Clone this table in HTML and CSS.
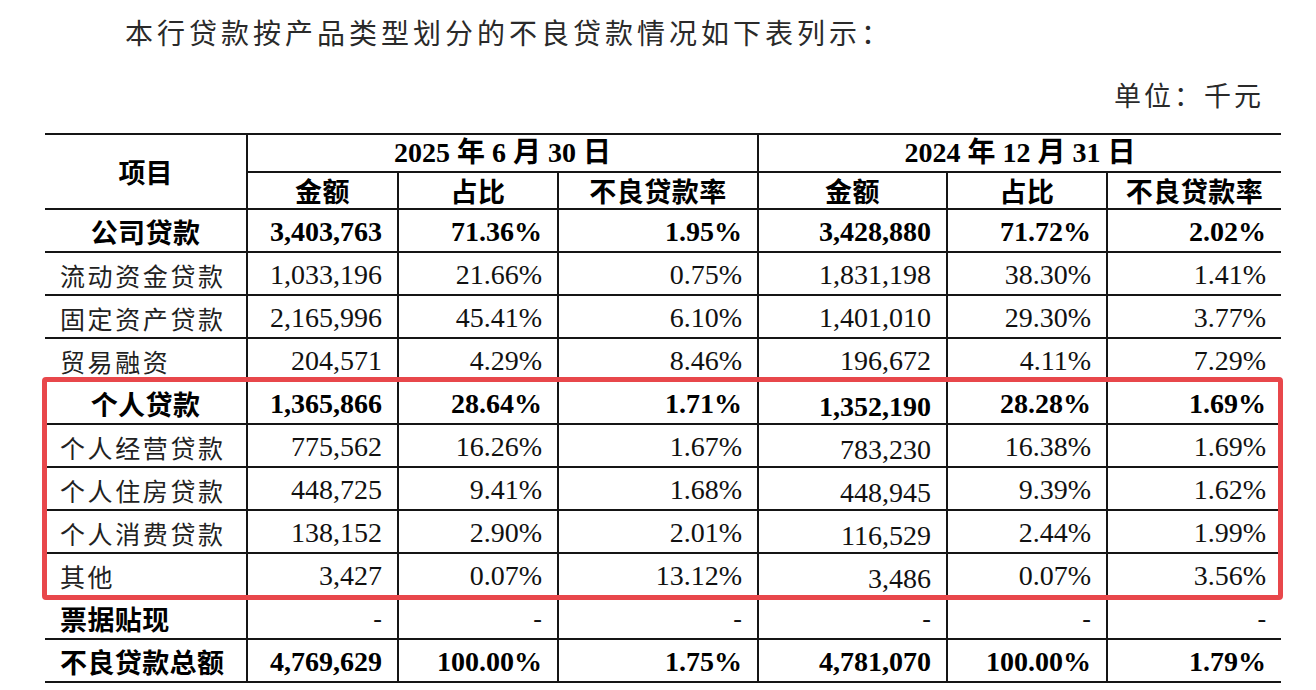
FILE: index.html
```html
<!DOCTYPE html>
<html lang="zh-CN">
<head>
<meta charset="utf-8">
<title>不良贷款情况</title>
<link rel="stylesheet" href="styles.css">
</head>
<body>
<div class="page">
  <p class="intro">本行贷款按产品类型划分的不良贷款情况如下表列示：</p>
  <p class="unit">单位：千元</p>
  <div class="table-wrap">
    <table class="npl">
      <colgroup>
        <col class="c-item"><col class="c-amt1"><col class="c-pct1"><col class="c-rate1">
        <col class="c-amt2"><col class="c-pct2"><col class="c-rate2">
      </colgroup>
      <thead>
        <tr class="hr1">
          <th rowspan="2" class="first">项目</th>
          <th colspan="3" class="date">2025 年 6 月 30 日</th>
          <th colspan="3" class="date last">2024 年 12 月 31 日</th>
        </tr>
        <tr class="hr2">
          <th>金额</th><th>占比</th><th>不良贷款率</th>
          <th>金额</th><th>占比</th><th class="last">不良贷款率</th>
        </tr>
      </thead>
      <tbody>
        <tr class="bold">
          <td class="first center">公司贷款</td>
          <td>3,403,763</td><td>71.36%</td><td>1.95%</td>
          <td>3,428,880</td><td>71.72%</td><td class="last">2.02%</td>
        </tr>
        <tr>
          <td class="first">流动资金贷款</td>
          <td>1,033,196</td><td>21.66%</td><td>0.75%</td>
          <td>1,831,198</td><td>38.30%</td><td class="last">1.41%</td>
        </tr>
        <tr>
          <td class="first">固定资产贷款</td>
          <td>2,165,996</td><td>45.41%</td><td>6.10%</td>
          <td>1,401,010</td><td>29.30%</td><td class="last">3.77%</td>
        </tr>
        <tr>
          <td class="first">贸易融资</td>
          <td>204,571</td><td>4.29%</td><td>8.46%</td>
          <td>196,672</td><td>4.11%</td><td class="last">7.29%</td>
        </tr>
        <tr class="bold">
          <td class="first center">个人贷款</td>
          <td>1,365,866</td><td>28.64%</td><td>1.71%</td>
          <td class="low">1,352,190</td><td>28.28%</td><td class="last">1.69%</td>
        </tr>
        <tr>
          <td class="first">个人经营贷款</td>
          <td>775,562</td><td>16.26%</td><td>1.67%</td>
          <td class="low">783,230</td><td>16.38%</td><td class="last">1.69%</td>
        </tr>
        <tr>
          <td class="first">个人住房贷款</td>
          <td>448,725</td><td>9.41%</td><td>1.68%</td>
          <td class="low">448,945</td><td>9.39%</td><td class="last">1.62%</td>
        </tr>
        <tr>
          <td class="first">个人消费贷款</td>
          <td>138,152</td><td>2.90%</td><td>2.01%</td>
          <td class="low">116,529</td><td>2.44%</td><td class="last">1.99%</td>
        </tr>
        <tr>
          <td class="first">其他</td>
          <td>3,427</td><td>0.07%</td><td>13.12%</td>
          <td class="low">3,486</td><td>0.07%</td><td class="last">3.56%</td>
        </tr>
        <tr class="dash">
          <td class="first strong">票据贴现</td>
          <td>-</td><td>-</td><td>-</td>
          <td>-</td><td>-</td><td class="last">-</td>
        </tr>
        <tr class="bold">
          <td class="first">不良贷款总额</td>
          <td>4,769,629</td><td>100.00%</td><td>1.75%</td>
          <td>4,781,070</td><td>100.00%</td><td class="last">1.79%</td>
        </tr>
      </tbody>
    </table>
    <div class="highlight"></div>
  </div>
</div>
</body>
</html>
```
FILE: styles.css
```css
html, body {
  margin: 0;
  padding: 0;
  background: #ffffff;
}

.page {
  width: 1316px;
  height: 690px;
  overflow: hidden;
  color: #111;
}

.intro {
  margin: 0;
  padding: 13px 0 0 125px;
  font-family: "Noto Sans CJK SC", "Noto Sans", sans-serif;
  font-size: 28px;
  line-height: 38px;
  letter-spacing: 4px;
  color: #2a2a2a;
}

.unit {
  margin: 25px 0 0 0;
  padding-right: 52px;
  text-align: right;
  font-family: "Noto Sans CJK SC", "Noto Sans", sans-serif;
  font-size: 27px;
  line-height: 38px;
  letter-spacing: 3px;
  color: #2a2a2a;
}

.table-wrap {
  position: relative;
  margin-top: 19px;
}

.npl {
  margin-left: 45px;
  width: 1236px;
  table-layout: fixed;
  border-collapse: collapse;
  font-family: "Liberation Serif", "Noto Sans CJK SC", serif;
  font-size: 28px;
  color: #111;
}

.c-item { width: 202px; }
.c-amt1 { width: 151px; }
.c-pct1 { width: 160px; }
.c-rate1 { width: 200px; }
.c-amt2 { width: 189px; }
.c-pct2 { width: 160px; }
.c-rate2 { width: 174px; }

.npl th,
.npl td {
  border: 2px solid #151515;
  padding: 0 15px;
  white-space: nowrap;
}

.npl .first { border-left: none; }
.npl .last { border-right: none; }

.npl th {
  font-weight: bold;
  text-align: center;
  font-family: "Liberation Serif", "Noto Sans CJK SC", serif;
  color: #000;
}

.npl th.first {
  font-family: "Noto Sans CJK SC", sans-serif;
  font-size: 27px;
}

.hr2 th {
  font-family: "Noto Sans CJK SC", sans-serif;
  font-size: 27px;
  letter-spacing: 0.5px;
}

.hr1 { height: 38px; }
.hr2 { height: 37px; }

.hr1 th, .hr2 th {
  line-height: 32px;
  padding-top: 0;
  padding-bottom: 0;
}

.npl tbody tr { height: 43px; }

.npl td {
  text-align: right;
  line-height: 34px;
  padding-top: 2px;
  padding-bottom: 0;
}

.npl td.first {
  text-align: left;
  font-family: "Noto Sans CJK SC", sans-serif;
  font-size: 25px;
  letter-spacing: 2.6px;
  color: #222;
}

.npl tr.bold td {
  font-weight: bold;
  color: #000;
}

.npl tr.bold td.first,
.npl td.strong {
  font-weight: bold;
  font-size: 27px;
  letter-spacing: 0.4px;
  color: #000;
}

.npl td.center { text-align: center; }

.npl td.low {
  padding-top: 9px;
  line-height: 30px;
}

.npl tr.dash td {
  font-size: 26px;
}

.npl tr.dash td.first {
  font-size: 27px;
}

.highlight {
  position: absolute;
  left: 42px;
  top: 244px;
  width: 1241px;
  height: 223px;
  box-sizing: border-box;
  border: 5px solid #e8474b;
  border-radius: 4px;
  pointer-events: none;
}
```
